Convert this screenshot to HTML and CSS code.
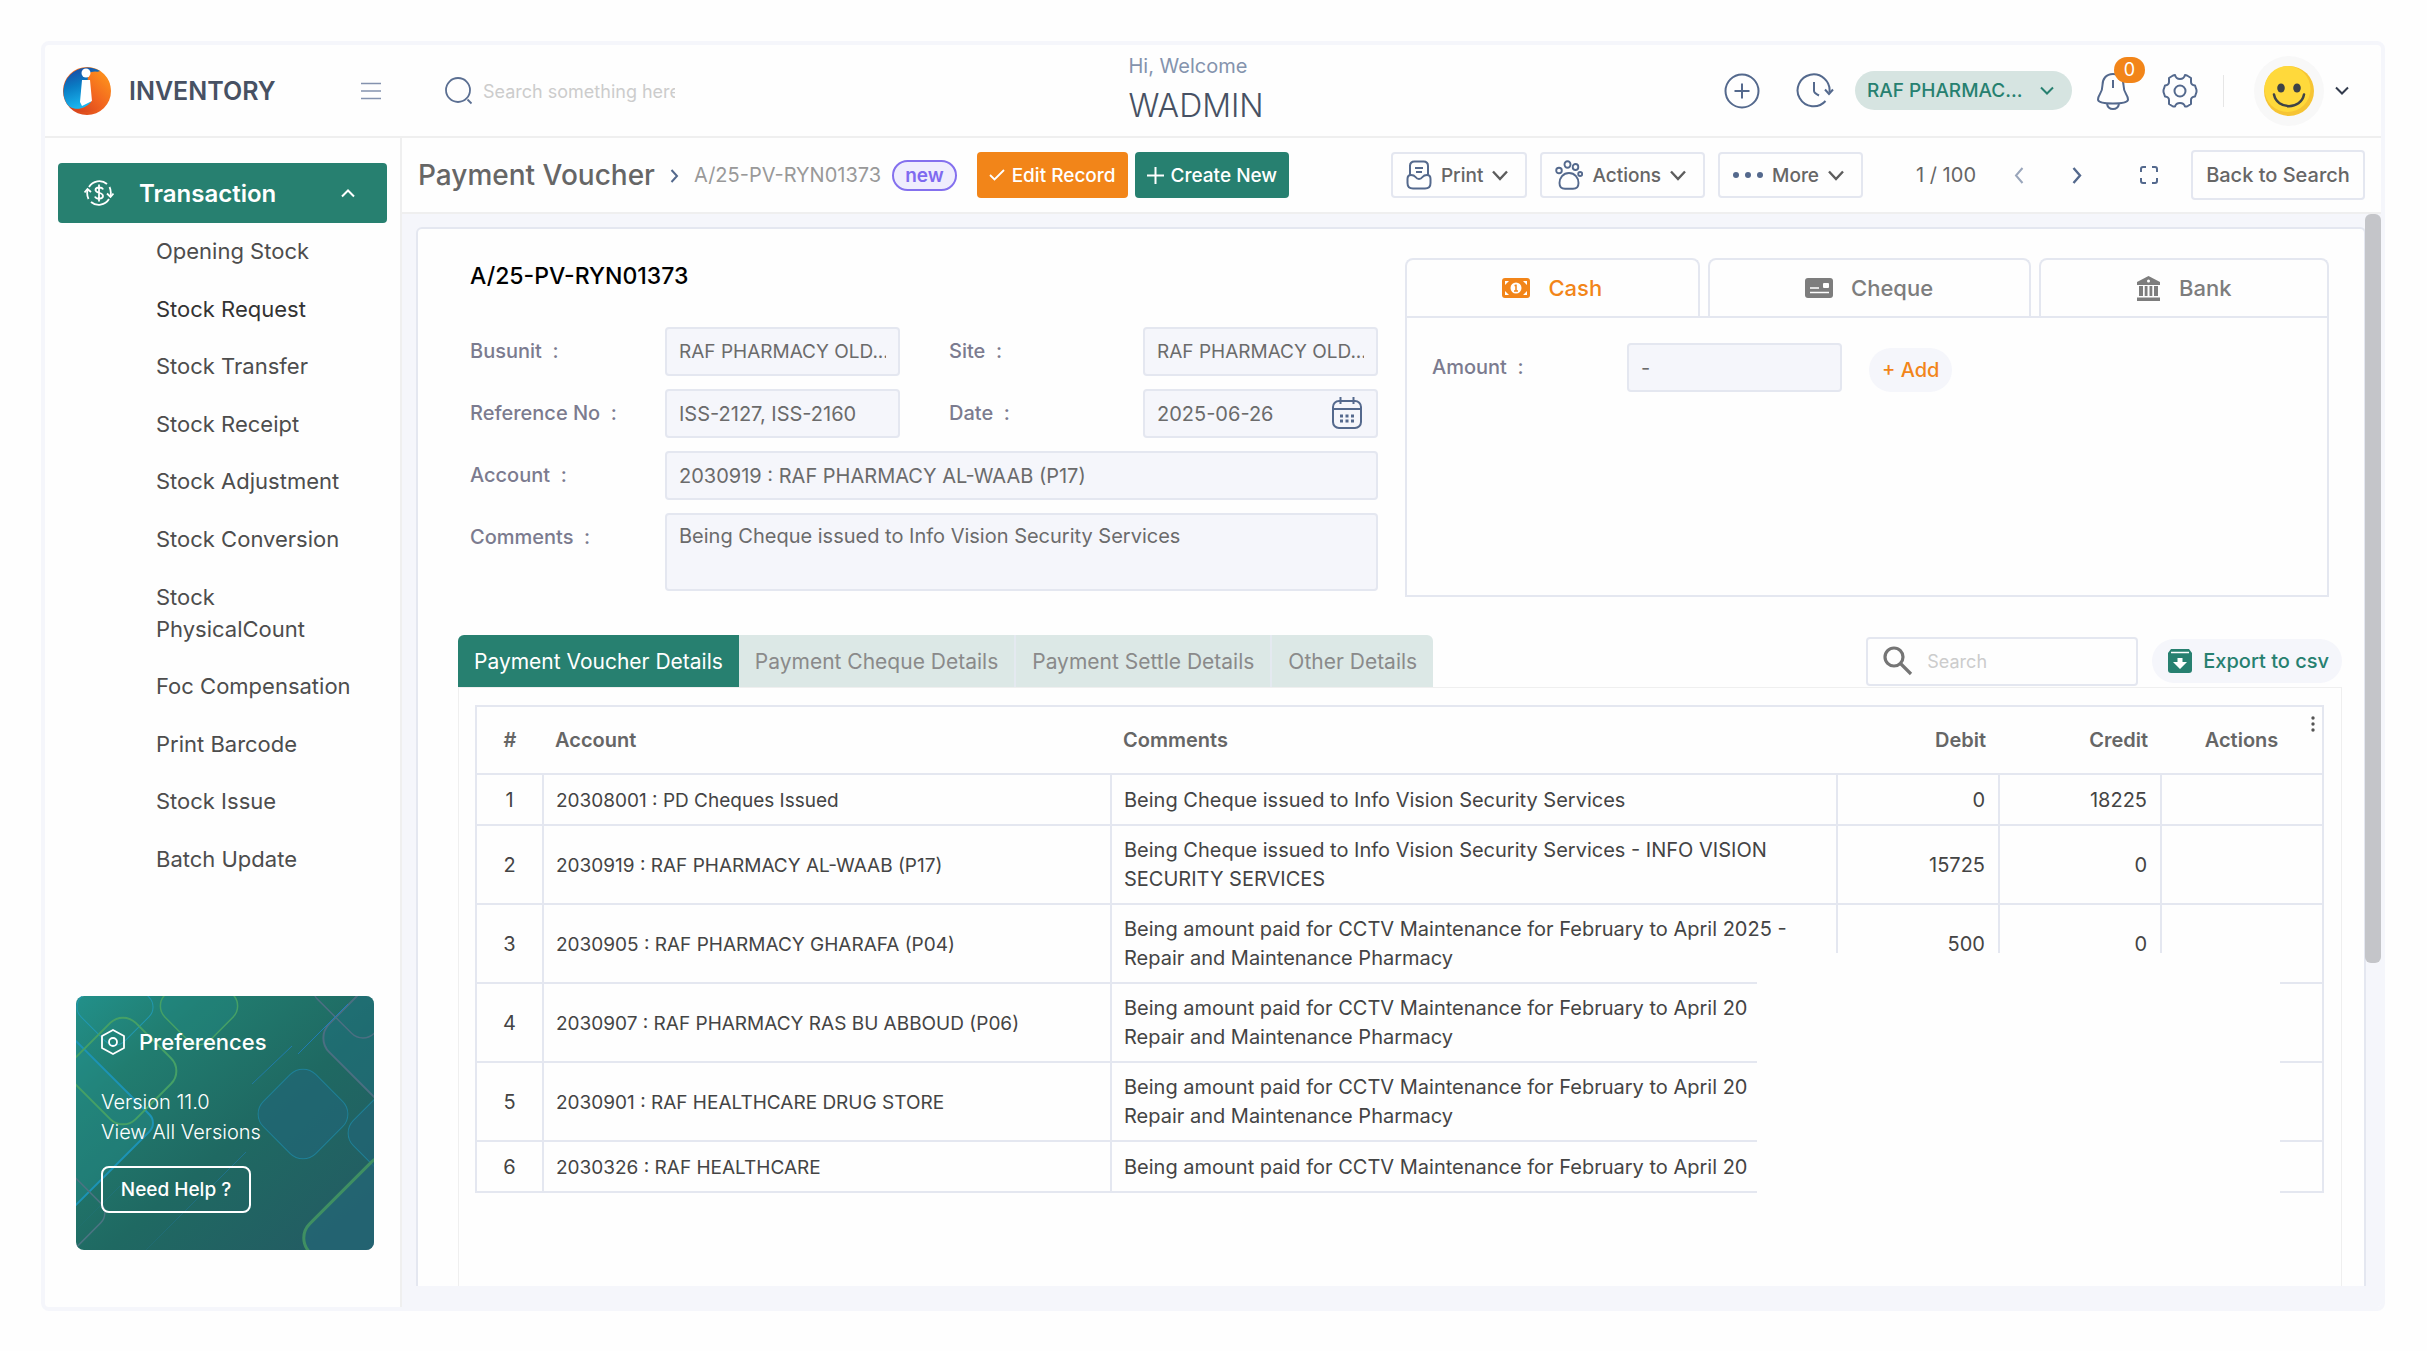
FILE: index.html
```html
<!DOCTYPE html>
<html lang="en">
<head>
    <meta charset="UTF-8">
    <title>Payment Voucher</title>
    <meta name="viewport" content="width=device-width, initial-scale=1.0">
    <link rel="stylesheet" href="styles.css">
</head>
<body>
<div class="app">
    <header class="topbar">
        <div class="brand">
            <svg width="50" height="50" viewBox="0 0 50 50">
                <defs>
                    <linearGradient id="lb" x1="0" y1="0" x2="0.3" y2="1">
                        <stop offset="0" stop-color="#1d3f9c"/>
                        <stop offset="0.5" stop-color="#0a7cc4"/>
                        <stop offset="1" stop-color="#19b5ee"/>
                    </linearGradient>
                    <linearGradient id="lo" x1="1" y1="0" x2="0" y2="1">
                        <stop offset="0" stop-color="#ff9a1c"/>
                        <stop offset="0.5" stop-color="#f2651f"/>
                        <stop offset="1" stop-color="#cf3b1c"/>
                    </linearGradient>
                </defs>
                <circle cx="25" cy="25" r="24" fill="url(#lo)"/>
                <path d="M38 5A24 24 0 0 0 5 38C9 44 18 44 24 38L26 9Z" fill="url(#lb)"/>
                <path d="M26 8C33 3 42 6 47 16C50 27 44 40 32 45C24 47 12 46 8 41C16 46 24 42 28 36Z" fill="url(#lo)"/>
                <path d="M7 40C14 45 23 43 29 36L28 30L20 38C15 42 10 42 7 40Z" fill="#19b5ee"/>
                <circle cx="24" cy="7" r="4.500" fill="#fff"/>
                <path d="M20 14H28L30 35L20 40L18 36Z" fill="#fff"/>
            </svg>
            <span class="brand-name">INVENTORY</span>
            <button class="icon-btn menu-btn" aria-label="Menu">
                <svg width="20" height="18" viewBox="0 0 20 18" stroke="#8492ae" stroke-width="1.600"><path d="M0 1.500H20M0 9H20M0 16.500H20"/></svg>
            </button>
        </div>
        <div class="top-search">
            <svg width="28" height="28" viewBox="0 0 28 28" fill="none" stroke="#5b6f92" stroke-width="1.800"><circle cx="13" cy="13" r="12"/><path d="M22.500 22.500L26.500 26.500"/></svg>
            <input type="text" placeholder="Search something here" aria-label="Search something here">
        </div>
        <div class="welcome">
            <span class="hi">Hi, Welcome</span>
            <span class="user">WADMIN</span>
        </div>
        <div class="top-tools">
            <button class="icon-btn add" aria-label="Add">
                <svg width="36" height="36" viewBox="0 0 36 36" fill="none" stroke="#54698d" stroke-width="2"><circle cx="18" cy="18" r="16.500"/><path d="M10.500 18H25.500M18 10.500V25.500"/></svg>
            </button>
            <button class="icon-btn history" aria-label="History">
                <svg width="38" height="36" viewBox="0 0 38 36" fill="none" stroke="#54698d" stroke-width="2"><path d="M29.500 28A16 16 0 1 1 33.500 19"/><path d="M29 16.500L33 21L37 16.500" /><path d="M18 9V18Q18 20 23 22.500"/></svg>
            </button>
            <button class="unit-pill">RAF PHARMAC...
                <svg width="14" height="10" viewBox="0 0 14 10" fill="none" stroke="#278070" stroke-width="2"><path d="M1 1.500L7 7.500L13 1.500"/></svg>
            </button>
            <button class="icon-btn bell" aria-label="Notifications">
                <svg width="34" height="38" viewBox="0 0 34 38" fill="none" stroke="#54698d" stroke-width="2"><path d="M17 2C10 2 6.500 7 6.500 13C6.500 22 2 22 2 27.500C2 31 10 31.500 17 31.500S32 31 32 27.500C32 22 27.500 22 27.500 13C27.500 7 24 2 17 2Z"/><path d="M17 8V16M11 32Q12 37 17 37T23 32"/></svg>
                <span class="badge">0</span>
            </button>
            <button class="icon-btn gear" aria-label="Settings">
                <svg width="36" height="36" viewBox="0 0 36 36" fill="none" stroke="#54698d" stroke-width="2" stroke-linejoin="round"><circle cx="18" cy="18" r="5.500"/><path d="M13 2L11 2.500L7 5V9Q7 12 3 12.500L1.500 17V19L3 23.500Q7 24 7 27V31L11 33.500H13Q14 30 18 30T23 33.500H25L29 31V27Q29 24 33 23.500L34.500 19V17L33 12.500Q29 12 29 9V5L25 2.500L23 2Q22 6 18 6T13 2Z"/></svg>
            </button>
            <span class="divider"></span>
            <button class="icon-btn profile" aria-label="Profile">
                <span class="avatar">
                    <svg width="50" height="50" viewBox="0 0 50 50"><circle cx="25" cy="25" r="25" fill="#f6c434"/><circle cx="23.500" cy="23" r="23" fill="#ffd93b"/><ellipse cx="17" cy="22" rx="3.800" ry="4.500" fill="#3e4347"/><ellipse cx="33" cy="22" rx="3.800" ry="4.500" fill="#3e4347"/><path d="M10 28.500C13 44 37 44 40 28.500" fill="none" stroke="#3e4347" stroke-width="2.500" stroke-linecap="round"/></svg>
                </span>
                <svg width="14" height="10" viewBox="0 0 14 10" fill="none" stroke="#333c4d" stroke-width="2"><path d="M1 1.500L7 7.500L13 1.500"/></svg>
            </button>
        </div>
    </header>

    <div class="body">
        <nav class="sidebar">
            <button class="section-btn">
                <svg width="30" height="26" viewBox="0 0 30 26" fill="none" stroke="#fff" stroke-width="1.800"><path d="M5 7A12 12 0 0 1 23 4M25.500 7Q27.500 11 26.500 16M25 19A12 12 0 0 1 7 22M4.500 19Q2.500 15 3.500 10"/><path d="M0.500 12.500L3.500 9L7 12M23 13.500L26.500 17L29.500 13.500"/><path d="M19 9.500C18 6.500 11.500 7 11.500 10C11.500 13.500 19 12 19 16C19 19.500 12 19.500 11 16.500M15 4.500V21.500"/></svg>
                <span>Transaction</span>
                <svg class="caret" width="14" height="10" viewBox="0 0 14 10" fill="none" stroke="#fff" stroke-width="2"><path d="M1 8.500L7 2.500L13 8.500"/></svg>
            </button>
            <ul class="menu">
                <li><a href="#">Opening Stock</a></li>
                <li><a href="#" class="current">Stock Request</a></li>
                <li><a href="#">Stock Transfer</a></li>
                <li><a href="#">Stock Receipt</a></li>
                <li><a href="#">Stock Adjustment</a></li>
                <li><a href="#">Stock Conversion</a></li>
                <li><a href="#">Stock PhysicalCount</a></li>
                <li><a href="#">Foc Compensation</a></li>
                <li><a href="#">Print Barcode</a></li>
                <li><a href="#">Stock Issue</a></li>
                <li><a href="#">Batch Update</a></li>
            </ul>
            <div class="prefs">
                <svg class="prefs-bg" viewBox="0 0 298 254" preserveAspectRatio="xMidYMid slice" fill="none">
                    <defs>
                        <linearGradient id="pg" x1="0" y1="0" x2="1" y2="1">
                            <stop offset="0" stop-color="#22908a"/>
                            <stop offset="0.220" stop-color="#217d70"/>
                            <stop offset="0.550" stop-color="#1f6962"/>
                            <stop offset="1" stop-color="#245963"/>
                        </linearGradient>
                        <linearGradient id="st" x1="1" y1="0" x2="0" y2="1">
                            <stop offset="0" stop-color="#1f7fc0"/>
                            <stop offset="1" stop-color="#1f7fc0" stop-opacity="0"/>
                        </linearGradient>
                    </defs>
                    <rect width="298" height="254" fill="url(#pg)"/>
                    <rect x="-75" y="62" width="130" height="130" rx="12" transform="rotate(45 -10 127)" fill="#239494" fill-opacity=".3" stroke="#1d93b5" stroke-width="2"/>
                    <rect x="8" y="-20" width="62" height="62" rx="14" transform="rotate(45 39 11)" stroke="#2298b0"/>
                    <rect x="91" y="-22" width="64" height="64" rx="16" transform="rotate(45 123 10)" fill="#228c88" fill-opacity=".3" stroke="#45a066" stroke-width="1.500"/>
                    <rect x="4" y="32" width="86" height="86" rx="18" transform="rotate(45 47 75)" stroke="#45a066" stroke-width="2"/>
                    <rect x="-62" y="177" width="80" height="80" rx="14" transform="rotate(45 -22 217)" stroke="#4b7482" stroke-width="1.500"/>
                    <rect x="190" y="81" width="74" height="74" rx="18" transform="rotate(45 227 118)" fill="#22657a" fill-opacity=".6" stroke="#1f8098"/>
                    <rect x="280" y="100" width="74" height="74" rx="18" transform="rotate(45 317 137)" fill="#22657a" fill-opacity=".6" stroke="#1f8098"/>
                    <rect x="266" y="-23" width="130" height="130" rx="20" transform="rotate(45 331 42)" fill="#207080" fill-opacity=".5" stroke="#4b6f82" stroke-width="2"/>
                    <rect x="254" y="-45" width="80" height="80" rx="16" transform="rotate(45 294 -15)" stroke="#4b6f82" stroke-width="1.500"/>
                    <rect x="246" y="178" width="128" height="128" rx="20" transform="rotate(45 310 242)" fill="#236778" fill-opacity=".7" stroke="#3f8f62" stroke-width="3"/>
                    <path d="M272 8L222 58M216 50L176 88M170 156L130 196M0 234L44 190M70 254L130 194" stroke="url(#st)"/>
                </svg>
                <div class="prefs-title">
                    <svg width="24" height="26" viewBox="0 0 24 26" fill="none" stroke="#fff" stroke-width="1.800" stroke-linejoin="round"><path d="M12 1L23 7V19L12 25L1 19V7Z"/><circle cx="12" cy="13" r="4"/></svg>
                    Preferences
                </div>
                <div class="prefs-version">Version 11.0</div>
                <a href="#" class="prefs-version">View All Versions</a>
                <button class="help-btn">Need Help ?</button>
            </div>
        </nav>

        <main class="main">
            <div class="pagebar">
                <h1>Payment Voucher</h1>
                <svg class="crumb" width="9" height="14" viewBox="0 0 9 14" fill="none" stroke="#54698d" stroke-width="2"><path d="M1.500 1L7 7L1.500 13"/></svg>
                <span class="record">A/25-PV-RYN01373</span>
                <span class="status">new</span>
                <button class="btn btn-edit">
                    <svg width="16" height="12" viewBox="0 0 16 12" fill="none" stroke="#fff" stroke-width="1.800"><path d="M1 6L5.500 10.500L15 1"/></svg>
                    Edit Record
                </button>
                <button class="btn btn-create">
                    <svg width="17" height="17" viewBox="0 0 17 17" fill="none" stroke="#fff" stroke-width="2"><path d="M8.500 0V17M0 8.500H17"/></svg>
                    Create New
                </button>
                <div class="page-tools">
                    <button class="btn btn-line">
                        <svg width="26" height="30" viewBox="0 0 26 30" fill="none" stroke="#54698d" stroke-width="2"><path d="M4 15V6Q4 1.500 8.500 1.500H17.500Q22 1.500 22 6V15"/><path d="M9 8H17M10 12H16"/><path d="M1.500 19Q1.500 15 5 15Q8 15 9.500 17T13 19T16.500 17T21 15Q24.500 15 24.500 19V23Q24.500 28.500 19 28.500H7Q1.500 28.500 1.500 23Z"/></svg>
                        Print
                        <svg width="16" height="11" viewBox="0 0 16 11" fill="none" stroke="#5d5d5d" stroke-width="2.400"><path d="M1 1.500L8 9L15 1.500"/></svg>
                    </button>
                    <button class="btn btn-line">
                        <svg width="28" height="30" viewBox="0 0 28 30" fill="none" stroke="#54698d" stroke-width="1.900"><ellipse cx="12.500" cy="4.500" rx="3" ry="3.300"/><ellipse cx="20.500" cy="7" rx="2.800" ry="3"/><circle cx="4" cy="10.500" r="2.800"/><circle cx="25.200" cy="14" r="2"/><path d="M14 13C8 13 4.500 18 4.500 23C4.500 27 7 28.800 10 28.800H18C21 28.800 23.500 27 23.500 23C23.500 18 20 13 14 13Z"/></svg>
                        Actions
                        <svg width="16" height="11" viewBox="0 0 16 11" fill="none" stroke="#5d5d5d" stroke-width="2.400"><path d="M1 1.500L8 9L15 1.500"/></svg>
                    </button>
                    <button class="btn btn-line">
                        <svg width="30" height="8" viewBox="0 0 30 8" fill="#54698d"><circle cx="3" cy="4" r="3"/><circle cx="15" cy="4" r="3"/><circle cx="27" cy="4" r="3"/></svg>
                        More
                        <svg width="16" height="11" viewBox="0 0 16 11" fill="none" stroke="#5d5d5d" stroke-width="2.400"><path d="M1 1.500L8 9L15 1.500"/></svg>
                    </button>
                    <span class="pager">1 / 100</span>
                    <button class="icon-btn prev" aria-label="Previous">
                        <svg width="10" height="17" viewBox="0 0 10 17" fill="none" stroke="#9aa6bb" stroke-width="2"><path d="M8.500 1L2 8.500L8.500 16"/></svg>
                    </button>
                    <button class="icon-btn next" aria-label="Next">
                        <svg width="10" height="17" viewBox="0 0 10 17" fill="none" stroke="#54698d" stroke-width="2.400"><path d="M1.500 1L8 8.500L1.500 16"/></svg>
                    </button>
                    <button class="icon-btn expand" aria-label="Full screen">
                        <svg width="18" height="18" viewBox="0 0 18 18" fill="none" stroke="#54698d" stroke-width="2"><path d="M1 6V3Q1 1 3 1H6M12 1H15Q17 1 17 3V6M17 12V15Q17 17 15 17H12M6 17H3Q1 17 1 15V12"/></svg>
                    </button>
                    <button class="btn btn-back">Back to Search</button>
                </div>
            </div>

            <div class="scroller">
                <section class="card">
                    <div class="voucher">
                        <div class="voucher-form">
                            <h2>A/25-PV-RYN01373</h2>
                            <div class="fields">
                                <label for="busunit">Busunit &nbsp;:</label>
                                <input id="busunit" class="unit" type="text" value="RAF PHARMACY OLD..." readonly>
                                <label for="site" class="second">Site &nbsp;:</label>
                                <input id="site" class="unit" type="text" value="RAF PHARMACY OLD..." readonly>
                                <label for="ref">Reference No &nbsp;:</label>
                                <input id="ref" type="text" value="ISS-2127, ISS-2160" readonly>
                                <label for="date" class="second">Date &nbsp;:</label>
                                <div class="date-box">
                                    <input id="date" type="text" value="2025-06-26" readonly>
                                    <svg width="30" height="32" viewBox="0 0 30 32" fill="none" stroke="#54698d" stroke-width="2"><rect x="1" y="4" width="28" height="27" rx="6"/><path d="M1 12H29M8.500 0V7M21.500 0V7"/><path d="M8 19H11M13.500 19H16.500M19 19H22M8 24H11M13.500 24H16.500M19 24H22" stroke-width="3"/></svg>
                                </div>
                                <label for="account">Account &nbsp;:</label>
                                <input id="account" class="wide" type="text" value="2030919 : RAF PHARMACY AL-WAAB (P17)" readonly>
                                <label for="comments">Comments &nbsp;:</label>
                                <textarea id="comments" class="wide" readonly>Being Cheque issued to Info Vision Security Services</textarea>
                            </div>
                        </div>
                        <div class="payment">
                            <div class="pay-tabs">
                                <button class="active">
                                    <svg width="28" height="20" viewBox="0 0 28 20"><rect width="28" height="20" rx="3" fill="#f28519"/><circle cx="14" cy="10" r="5.500" fill="#fff"/><path d="M14 6.500V13M12.500 7.500H14M12 13H16" stroke="#f28519" stroke-width="1.500"/><path d="M3 3H7L3 7ZM25 3H21L25 7ZM3 17H7L3 13ZM25 17H21L25 13Z" fill="#fff"/></svg>
                                    Cash
                                </button>
                                <button>
                                    <svg width="28" height="20" viewBox="0 0 28 20"><rect width="28" height="20" rx="3" fill="#7d7d7d"/><path d="M5 10H14M5 14.500H24" stroke="#fff" stroke-width="1.600"/><rect x="18" y="5" width="6" height="5" rx="1" fill="#fff"/></svg>
                                    Cheque
                                </button>
                                <button>
                                    <svg width="25" height="25" viewBox="0 0 25 25" fill="#7d7d7d"><path d="M12.500 0L24 6V9H1V6Z"/><circle cx="12.500" cy="5" r="1.500" fill="#fff"/><path d="M3 10H7V20H3ZM8.700 10H11.500V20H8.700ZM13.500 10H16.300V20H13.500ZM18 10H22V20H18ZM1 21.500H24V25H1Z"/></svg>
                                    Bank
                                </button>
                            </div>
                            <div class="pay-body">
                                <label for="amount">Amount &nbsp;:</label>
                                <input id="amount" type="text" value="-" readonly>
                                <button class="add-btn">+ Add</button>
                            </div>
                        </div>
                    </div>

                    <div class="details">
                        <div class="details-bar">
                            <div class="tabs">
                                <button class="active">Payment Voucher Details</button>
                                <button>Payment Cheque Details</button>
                                <button>Payment Settle Details</button>
                                <button>Other Details</button>
                            </div>
                            <div class="table-search">
                                <svg width="30" height="30" viewBox="0 0 30 30" fill="none" stroke="#757575" stroke-width="3.200"><circle cx="11" cy="11" r="9"/><path d="M17.500 17.500L28 28"/></svg>
                                <input type="text" placeholder="Search" aria-label="Search">
                            </div>
                            <button class="export-btn">
                                <svg width="26" height="26" viewBox="0 0 26 26"><path d="M4 1H22L25 5V22Q25 25 22 25H4Q1 25 1 22V5Z" fill="#278070"/><path d="M4 4.500H22" stroke="#fff" stroke-width="1.500"/><path d="M10.500 10H15.500V14H20L13 21L6 14H10.500Z" fill="#fff"/></svg>
                                Export to csv
                            </button>
                        </div>
                        <div class="table-wrap">
                            <table>
                                <colgroup>
                                    <col class="c-num">
                                    <col class="c-account">
                                    <col>
                                    <col class="c-amt">
                                    <col class="c-amt">
                                    <col class="c-amt">
                                </colgroup>
                                <thead>
                                    <tr>
                                        <th class="num">#</th>
                                        <th>Account</th>
                                        <th>Comments</th>
                                        <th class="amt">Debit</th>
                                        <th class="amt">Credit</th>
                                        <th class="num">Actions</th>
                                    </tr>
                                </thead>
                                <tbody>
                                    <tr><td class="num">1</td><td class="account">20308001 : PD Cheques Issued</td><td>Being Cheque issued to Info Vision Security Services</td><td class="amt">0</td><td class="amt">18225</td><td></td></tr>
                                    <tr><td class="num">2</td><td class="account">2030919 : RAF PHARMACY AL-WAAB (P17)</td><td>Being Cheque issued to Info Vision Security Services - INFO VISION<br>SECURITY SERVICES</td><td class="amt">15725</td><td class="amt">0</td><td></td></tr>
                                    <tr><td class="num">3</td><td class="account">2030905 : RAF PHARMACY GHARAFA (P04)</td><td>Being amount paid for CCTV Maintenance for February to April 2025 -<br>Repair and Maintenance Pharmacy</td><td class="amt">500</td><td class="amt">0</td><td></td></tr>
                                    <tr><td class="num">4</td><td class="account">2030907 : RAF PHARMACY RAS BU ABBOUD (P06)</td><td>Being amount paid for CCTV Maintenance for February to April 20<br>Repair and Maintenance Pharmacy</td><td></td><td></td><td></td></tr>
                                    <tr><td class="num">5</td><td class="account">2030901 : RAF HEALTHCARE DRUG STORE</td><td>Being amount paid for CCTV Maintenance for February to April 20<br>Repair and Maintenance Pharmacy</td><td></td><td></td><td></td></tr>
                                    <tr><td class="num">6</td><td class="account">2030326 : RAF HEALTHCARE</td><td>Being amount paid for CCTV Maintenance for February to April 20</td><td></td><td></td><td></td></tr>
                                </tbody>
                            </table>
                            <button class="icon-btn kebab" aria-label="Table options">
                                <svg width="4" height="16" viewBox="0 0 4 16" fill="#555"><circle cx="2" cy="2" r="1.700"/><circle cx="2" cy="8" r="1.700"/><circle cx="2" cy="14" r="1.700"/></svg>
                            </button>
                            <div class="blank"></div>
                        </div>
                    </div>
                </section>
                <div class="scroll-thumb"></div>
            </div>
        </main>
    </div>
</div>
</body>
</html>
```

FILE: styles.css
```css
* {
    box-sizing: border-box;
}
body {
    margin: 0;
    background: #fefefe;
    color: #666;
    font-family: Inter, "Open Sans", sans-serif;
    font-size: 20px;
}
button, input, textarea {
    font-family: inherit;
    font-size: inherit;
    color: inherit;
}
button {
    cursor: pointer;
}
svg {
    display: block;
    flex: none;
}
a {
    color: inherit;
    text-decoration: none;
}
.app {
    display: flex;
    flex-direction: column;
    height: calc(100vh - 81px);
    margin: 41px 42px 40px 41px;
    border: 4px solid #f5f6fb;
    border-radius: 8px;
    background: #fefefe;
    overflow: hidden;
}
.icon-btn {
    padding: 0;
    border: none;
    background: none;
}

/* top bar */
.topbar {
    display: flex;
    align-items: center;
    height: 93px;
    border-bottom: 2px solid #efefef;
}
.brand {
    display: flex;
    align-items: center;
    width: 400px;
    padding-left: 17px;
}
.brand-name {
    margin-left: 17px;
    font-size: 25px;
    font-weight: 600;
    color: #475163;
}
.menu-btn {
    margin-left: auto;
    margin-right: 64px;
}
.top-search {
    display: flex;
    align-items: center;
    flex: 684;
    gap: 10px;
}
.top-search input {
    width: 192px;
    padding: 2px 0 0;
    border: none;
    outline: none;
    background: none;
    font-size: 18px;
}
input::placeholder {
    color: #ccc;
}
.welcome {
    display: flex;
    flex-direction: column;
    flex: 596;
    padding-bottom: 2px;
}
.hi {
    font-size: 20px;
    line-height: 32px;
    color: #8493ad;
}
.user {
    font-size: 32px;
    font-weight: 300;
    line-height: 48px;
    color: #475163;
}
.top-tools {
    display: flex;
    align-items: center;
    padding-right: 32px;
}
.history {
    margin: 0 21px 0 36px;
}
.unit-pill {
    display: flex;
    align-items: center;
    justify-content: space-between;
    width: 217px;
    height: 39px;
    padding: 0 18px 0 12px;
    border: none;
    border-radius: 20px;
    background: #d6e4e1;
    color: #278070;
    font-size: 19px;
    font-weight: 500;
}
.bell {
    position: relative;
    margin: 0 32px 0 24px;
}
.badge {
    position: absolute;
    top: -15px;
    left: 18px;
    width: 31px;
    height: 26px;
    border-radius: 13px;
    background: #f28519;
    color: #fff;
    font-size: 18px;
    line-height: 26px;
}
.divider {
    width: 1px;
    height: 32px;
    margin: 0 30px 0 25px;
    background: #e6e6e6;
}
.profile {
    display: flex;
    align-items: center;
    gap: 11px;
}
.avatar {
    padding: 10px;
    border-radius: 50%;
    background: #f8f8f8;
}

/* sidebar */
.body {
    display: flex;
    flex: 1;
    min-height: 0;
}
.sidebar {
    display: flex;
    flex-direction: column;
    flex: none;
    width: 357px;
    padding: 25px 13px 0;
    border-right: 2px solid #efefef;
}
.section-btn {
    display: flex;
    align-items: center;
    height: 60px;
    padding: 0 32px 0 26px;
    border: none;
    border-radius: 4px;
    background: #278070;
    color: #fff;
    font-size: 24px;
    font-weight: 600;
}
.section-btn span {
    margin-left: 25px;
}
.caret {
    margin-left: auto;
}
.menu {
    display: flex;
    flex-direction: column;
    justify-content: space-between;
    min-height: 640px;
    margin: 12px 24px 0 98px;
    padding: 0;
    list-style: none;
    color: #4d4d4d;
    font-size: 22px;
    line-height: 32px;
}
.current {
    color: #333;
}
.prefs {
    position: relative;
    z-index: 0;
    display: flex;
    flex-direction: column;
    align-items: flex-start;
    height: 254px;
    margin: 121px 13px 0 18px;
    padding: 31px 25px 36px;
    border-radius: 8px;
    overflow: hidden;
    color: #fff;
    font-size: 20px;
    line-height: 30px;
}
.prefs-bg {
    position: absolute;
    inset: 0;
    width: 100%;
    height: 100%;
    z-index: -1;
}
.prefs-title {
    display: flex;
    align-items: center;
    gap: 14px;
    margin-bottom: 30px;
    font-size: 22px;
    font-weight: 500;
}
.prefs-version {
    font-weight: 300;
}
.help-btn {
    width: 150px;
    height: 47px;
    margin-top: 19px;
    border: 2px solid #fff;
    border-radius: 8px;
    background: none;
    font-size: 19px;
    font-weight: 500;
}

/* page bar */
.main {
    display: flex;
    flex-direction: column;
    flex: 1;
    min-width: 0;
}
.pagebar {
    display: flex;
    align-items: center;
    flex: none;
    height: 76px;
    padding: 0 16px;
    border-bottom: 2px solid #efefef;
}
h1 {
    margin: 0;
    font-size: 28px;
    font-weight: 500;
    color: #666;
}
.crumb {
    margin: 2px 15px 0;
}
.record {
    font-size: 20px;
    color: #999;
}
.status {
    margin: 0 20px 0 11px;
    padding: 0 11px;
    border: 2px solid #8470ee;
    border-radius: 16px;
    background: #efedfd;
    color: #7f6af0;
    font-size: 19px;
    font-weight: 600;
    line-height: 27px;
}
.btn {
    display: flex;
    align-items: center;
    justify-content: center;
    gap: 7px;
    height: 46px;
    padding: 0 12px;
    border: none;
    border-radius: 4px;
    font-size: 19px;
    font-weight: 500;
    white-space: nowrap;
}
.btn-edit {
    margin-right: 7px;
    background: #f28519;
    color: #fff;
}
.btn-create {
    background: #278070;
    color: #fff;
}
.page-tools {
    display: flex;
    align-items: center;
    margin-left: auto;
}
.btn-line, .btn-back {
    border: 2px solid #e4e7f0;
    background: #fefefe;
    color: #666;
}
.btn-line {
    gap: 9px;
    margin-right: 13px;
    padding: 0 17px 0 13px;
}
.pager {
    margin: 0 38px 0 40px;
    font-size: 20px;
}
.next {
    margin: 0 58px 0 48px;
}
.expand {
    margin-right: 33px;
}
.btn-back {
    width: 174px;
    height: 50px;
    font-size: 20px;
}

/* voucher card */
.scroller {
    position: relative;
    flex: 1;
    min-height: 0;
    padding: 13px 15px 21px 14px;
    background: #f5f6fb;
}
.scroll-thumb {
    position: absolute;
    top: 0;
    right: 0;
    width: 16px;
    height: 749px;
    border-radius: 6px;
    background: #c4c5c9;
}
.card {
    height: 100%;
    overflow: hidden;
    border: 2px solid #e4e7f0;
    border-bottom: none;
    border-radius: 6px 6px 0 0;
    background: #fefefe;
}
.voucher {
    display: grid;
    grid-template-columns: 908fr 924fr;
    gap: 27px;
    padding: 29px 35px 0 52px;
}
h2 {
    margin: 0;
    padding: 2px 0 35px;
    font-size: 23px;
    font-weight: 500;
    line-height: 32px;
    color: #000;
}
.fields {
    display: grid;
    grid-template-columns: 195px 1fr 243px 1fr;
    row-gap: 13px;
}
.fields label, .pay-body label {
    line-height: 49px;
    color: #7b7b8f;
    font-weight: 500;
}
.fields .second {
    padding-left: 49px;
}
.fields input, .fields textarea, .pay-body input {
    width: 100%;
    height: 49px;
    padding: 0 12px;
    border: 2px solid #e4e7f0;
    border-radius: 4px;
    outline: none;
    background: #f5f6fb;
    color: #6b6b6b;
}
.fields .unit {
    font-size: 19px;
}
.fields textarea {
    display: block;
    height: 78px;
    padding: 9px 12px;
    line-height: 24px;
    resize: none;
}
.fields .wide {
    grid-column: span 3;
}
.date-box {
    position: relative;
}
.date-box svg {
    position: absolute;
    top: 8px;
    right: 16px;
}
.payment {
    display: flex;
    flex-direction: column;
    height: 339px;
}
.pay-tabs {
    display: flex;
    gap: 8px;
    height: 58px;
}
.pay-tabs button {
    display: flex;
    align-items: center;
    justify-content: center;
    flex: 1 1 auto;
    gap: 18px;
    border: 2px solid #e4e7f0;
    border-bottom: none;
    border-radius: 8px 8px 0 0;
    background: none;
    color: #7d7d7d;
    font-size: 22px;
    font-weight: 500;
}
.pay-tabs .active {
    color: #f28519;
}
.pay-body {
    display: flex;
    align-items: flex-start;
    flex: 1;
    padding: 25px;
    border: 2px solid #e4e7f0;
}
.pay-body label {
    width: 195px;
}
.pay-body input {
    width: 215px;
}
.add-btn {
    height: 44px;
    margin: 5px 0 0 27px;
    padding: 0 13px;
    border: none;
    border-radius: 22px;
    background: #f5f6fb;
    color: #f28519;
    font-weight: 500;
}

/* detail tabs and table */
.details {
    margin: 38px 22px 0 40px;
}
.details-bar {
    display: flex;
    align-items: center;
    height: 52px;
}
.tabs {
    display: flex;
    height: 52px;
    margin-right: auto;
    border-radius: 6px 6px 0 0;
    overflow: hidden;
}
.tabs button {
    padding: 0 16px;
    border: none;
    border-right: 2px solid #e4e9f0;
    background: #dce8e6;
    color: #8a8a8a;
    font-size: 21px;
}
.tabs button:last-child {
    border-right: none;
}
.tabs .active {
    border-right: none;
    background: #278070;
    color: #fff;
}
.table-search {
    display: flex;
    align-items: center;
    gap: 14px;
    width: 272px;
    height: 49px;
    margin-right: 14px;
    padding: 0 15px;
    border: 2px solid #e4e7f0;
    border-radius: 4px;
}
.table-search input {
    width: 100%;
    padding: 0;
    border: none;
    outline: none;
    background: none;
    font-size: 18px;
}
.export-btn {
    display: flex;
    align-items: center;
    gap: 10px;
    height: 44px;
    padding: 0 13px 0 15px;
    border: none;
    border-radius: 22px;
    background: #f5f6fb;
    color: #278070;
    font-weight: 500;
}
.table-wrap {
    position: relative;
    min-height: 640px;
    padding: 17px 17px 16px 16px;
    border: 1px solid #efefef;
}
table {
    width: 100%;
    border-collapse: collapse;
    border: 2px solid #e4e7f0;
    table-layout: fixed;
    color: #444;
    line-height: 29px;
}
.c-num {
    width: 67px;
}
.c-account {
    width: 568px;
}
.c-amt {
    width: 162px;
}
th {
    height: 68px;
    padding: 0 12px;
    text-align: left;
    font-weight: 600;
    color: #666;
}
td {
    height: 51px;
    padding: 10px 12px 9px;
    border: 2px solid #e4e7f0;
    white-space: nowrap;
}
.account {
    font-size: 19px;
}
.num {
    text-align: center;
}
.amt {
    padding-right: 13px;
    text-align: right;
}
.kebab {
    position: absolute;
    top: 28px;
    right: 26px;
}
.blank {
    position: absolute;
    top: 265px;
    right: 61px;
    width: 523px;
    height: 248px;
    background: #fefefe;
}
```
